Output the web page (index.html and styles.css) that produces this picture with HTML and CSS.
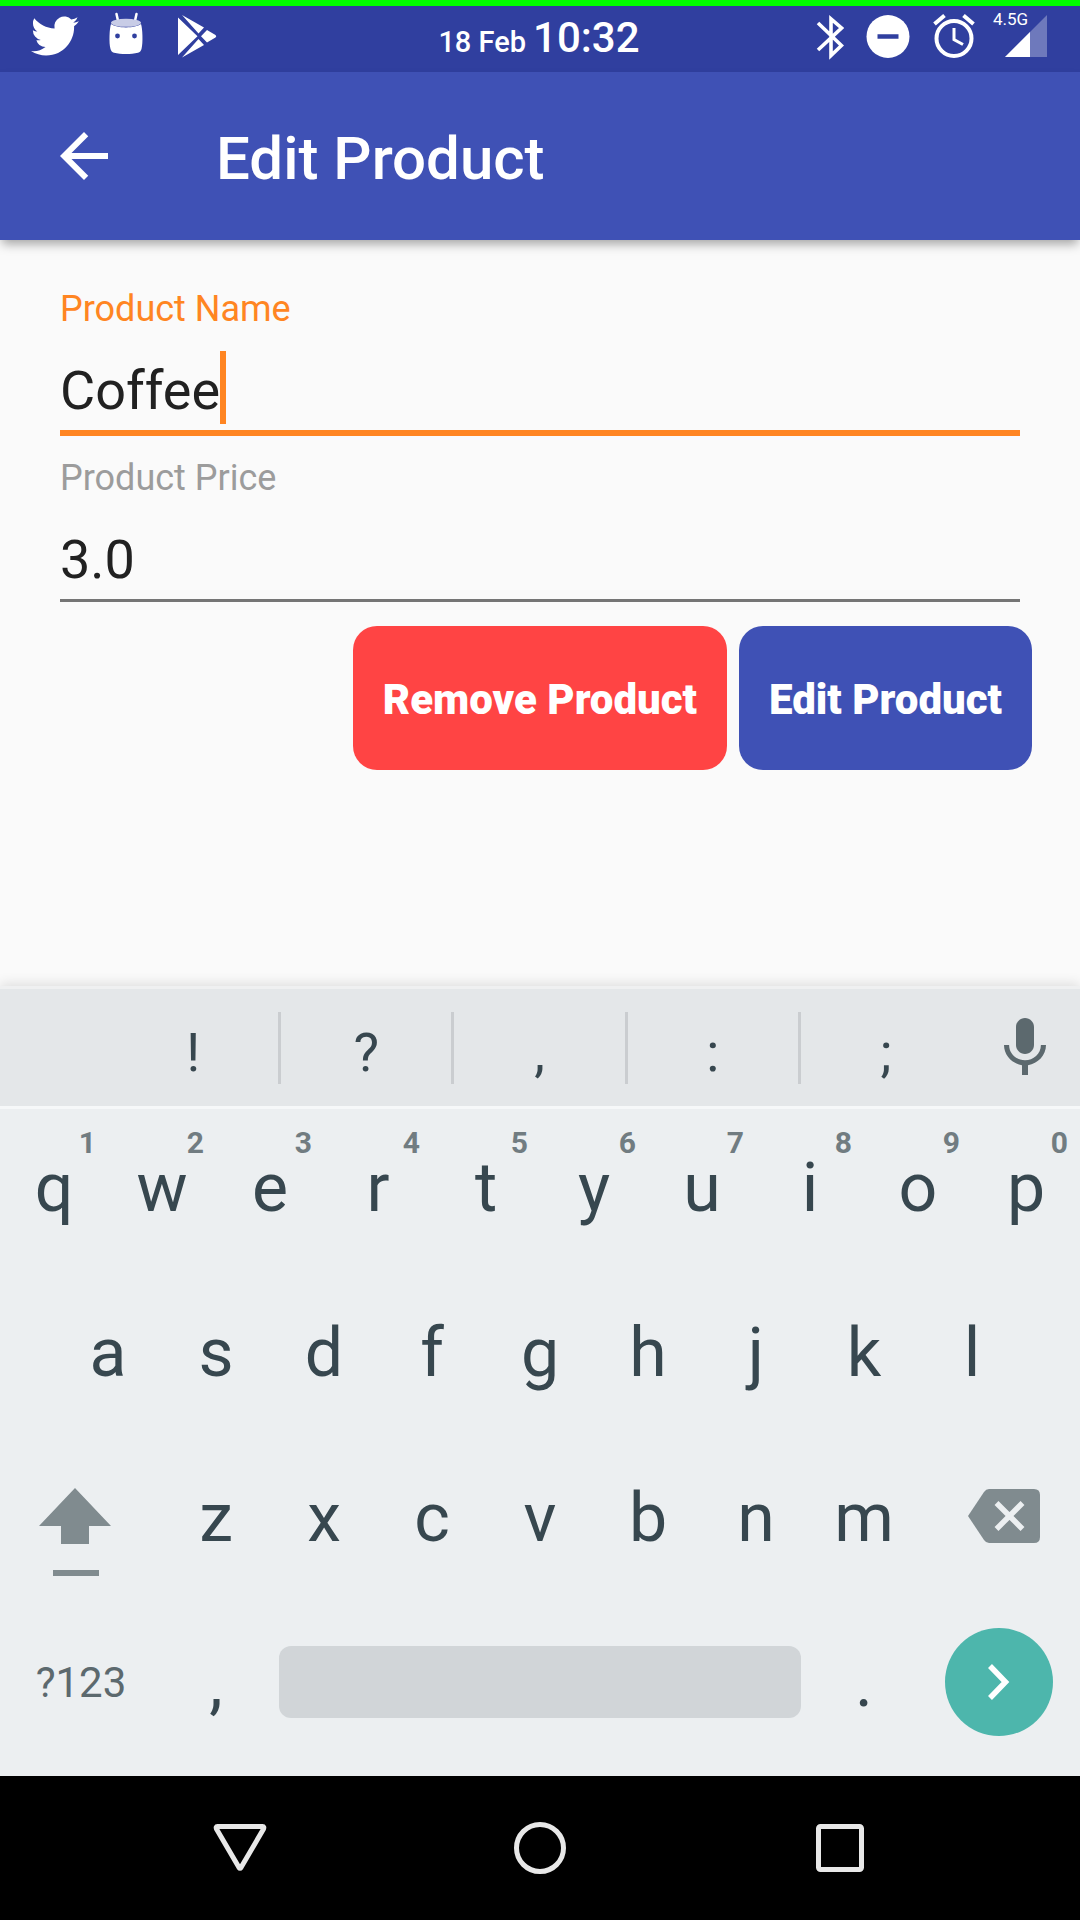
FILE: index.html
```html
<!DOCTYPE html>
<html lang="en">
<head>
<meta charset="utf-8">
<meta name="viewport" content="width=device-width, initial-scale=1">
<title>Edit Product</title>
<link rel="stylesheet" href="styles.css">
</head>
<body>
<div class="screen">
  <div class="status-bar">
    <div class="status-group status-left">
      <svg width="48" height="48" viewBox="0 0 24 24" fill="#fff" aria-hidden="true"><path d="M23.95 4.57a10 10 0 0 1-2.82.77 4.96 4.96 0 0 0 2.16-2.72c-.95.55-2 .95-3.13 1.18a4.92 4.92 0 0 0-8.38 4.48C7.69 8.09 4.07 6.13 1.64 3.16a4.82 4.82 0 0 0-.67 2.48c0 1.71.87 3.21 2.19 4.1a4.9 4.9 0 0 1-2.23-.62v.06a4.92 4.92 0 0 0 3.95 4.83 5 5 0 0 1-2.21.08 4.94 4.94 0 0 0 4.6 3.42A9.87 9.87 0 0 1 0 19.54a13.99 13.99 0 0 0 7.55 2.21c9.05 0 14-7.5 14-13.98 0-.21 0-.42-.02-.63a9.94 9.94 0 0 0 2.42-2.57z"/></svg>
      <svg width="36" height="48" viewBox="0 0 36 48" aria-hidden="true"><path d="M8.500 2l2 9M28.500 2l-2 9" stroke="#fff" stroke-width="2.500" stroke-linecap="round"/><path d="M3 12C1.500 16 .8 31 2.500 37c.5 2 1.700 3.300 3.500 3.800 7 1.600 17 1.600 24 0 1.800-.5 3-1.800 3.500-3.800C35.200 31 34.500 16 33 12c-6 4.500-24 4.500-30 0z" fill="#fff"/><ellipse cx="18" cy="10.800" rx="15" ry="4" fill="#c8cce6"/><circle cx="9.500" cy="24" r="2.400" fill="#303f9f"/><circle cx="26.500" cy="24" r="2.400" fill="#303f9f"/></svg>
      <svg width="46" height="48" viewBox="-4 0 46 48" fill="#fff" aria-hidden="true"><path d="M1 5.500l19.500 18.800L1 43z M5 3l22 12.500-5.500 6z M5 45.500l22-12.500-5.500-6z M30 18l8.500 5q1.500 1.300 0 2.600L30 30.500l-6-6.200z"/></svg>
    </div>
    <div class="clock"><span class="date">18 Feb</span> <span class="time">10:32</span></div>
    <div class="status-group status-right">
      <svg width="28" height="48" viewBox="0 0 28 48" fill="none" stroke="#fff" stroke-width="3.600" aria-hidden="true"><path d="M2 11l23.500 22.500L15 43.500V7l10.500 9L2 38"/></svg>
      <svg width="44" height="48" viewBox="0 0 44 48" aria-hidden="true"><circle cx="22" cy="24.500" r="21.500" fill="#fff"/><path d="M11.500 24.500h21" stroke="#303f9f" stroke-width="4.500"/></svg>
      <svg width="44" height="48" viewBox="0 0 44 48" fill="none" stroke="#fff" stroke-width="4" aria-hidden="true"><circle cx="22" cy="26.500" r="17.500"/><path d="M2.500 12l10-8.500M41.500 12l-10-8.500"/><path d="M22 16v11.500l9 5" stroke-width="3"/></svg>
      <div class="signal">
        <svg width="42" height="48" viewBox="0 0 42 48" aria-hidden="true"><path d="M0 45L42 3v42z" fill="#fff" fill-opacity=".3"/><path d="M0 45l25-25v25z" fill="#fff"/></svg>
        <span class="network">4.5G</span>
      </div>
    </div>
  </div>

  <header class="app-bar">
    <button class="back" type="button" aria-label="Back">
      <svg width="72" height="72" viewBox="0 0 24 24" fill="#fff"><path d="M20 11H7.830l5.590-5.590L12 4l-8 8 8 8 1.410-1.410L7.830 13H20v-2z"/></svg>
    </button>
    <h1 class="title">Edit Product</h1>
  </header>

  <main class="content">
    <form class="form">
      <div class="field field-active">
        <label class="label" for="name">Product Name</label>
        <input class="input" id="name" type="text" value="Coffee" autocomplete="off">
        <span class="caret"></span>
      </div>
      <div class="field">
        <label class="label" for="price">Product Price</label>
        <input class="input" id="price" type="text" inputmode="decimal" value="3.0" autocomplete="off">
      </div>
      <div class="actions">
        <button class="btn btn-danger" type="button">Remove Product</button>
        <button class="btn btn-primary" type="button">Edit Product</button>
      </div>
    </form>
  </main>

  <section class="keyboard" aria-label="Keyboard">
    <div class="suggestions">
      <button class="suggestion" type="button">!</button>
      <button class="suggestion" type="button">?</button>
      <button class="suggestion" type="button">,</button>
      <button class="suggestion" type="button">:</button>
      <button class="suggestion" type="button">;</button>
      <button class="mic" type="button" aria-label="Voice input">
        <svg width="72" height="72" viewBox="0 0 24 24" fill="#5c696e"><path d="M12 14c1.660 0 3-1.340 3-3V5c0-1.660-1.340-3-3-3S9 3.340 9 5v6c0 1.660 1.340 3 3 3z"/><path d="M17.300 11c0 3-2.540 5.100-5.300 5.100S6.700 14 6.700 11H5c0 3.410 2.720 6.230 6 6.720V21h2v-3.280c3.280-.48 6-3.300 6-6.720h-1.700z"/></svg>
      </button>
    </div>
    <div class="keys">
      <div class="row">
        <button class="key" type="button">q<span class="hint">1</span></button>
        <button class="key" type="button">w<span class="hint">2</span></button>
        <button class="key" type="button">e<span class="hint">3</span></button>
        <button class="key" type="button">r<span class="hint">4</span></button>
        <button class="key" type="button">t<span class="hint">5</span></button>
        <button class="key" type="button">y<span class="hint">6</span></button>
        <button class="key" type="button">u<span class="hint">7</span></button>
        <button class="key" type="button">i<span class="hint">8</span></button>
        <button class="key" type="button">o<span class="hint">9</span></button>
        <button class="key" type="button">p<span class="hint">0</span></button>
      </div>
      <div class="row row-inset">
        <button class="key" type="button">a</button>
        <button class="key" type="button">s</button>
        <button class="key" type="button">d</button>
        <button class="key" type="button">f</button>
        <button class="key" type="button">g</button>
        <button class="key" type="button">h</button>
        <button class="key" type="button">j</button>
        <button class="key" type="button">k</button>
        <button class="key" type="button">l</button>
      </div>
      <div class="row">
        <button class="key key-wide key-shift" type="button" aria-label="Shift">
          <svg width="72" height="88" viewBox="0 0 72 88" fill="#808b8f"><path d="M36 0l36 38H50v18H22V38H0z"/><path d="M14 82h46v6H14z"/></svg>
        </button>
        <button class="key" type="button">z</button>
        <button class="key" type="button">x</button>
        <button class="key" type="button">c</button>
        <button class="key" type="button">v</button>
        <button class="key" type="button">b</button>
        <button class="key" type="button">n</button>
        <button class="key" type="button">m</button>
        <button class="key key-wide key-delete" type="button" aria-label="Delete">
          <svg width="72" height="54" viewBox="0 0 72 54"><path d="M0 27L16 3q2-3 5-3h45q6 0 6 6v42q0 6-6 6H21q-3 0-5-3z" fill="#808b8f"/><path d="M28.500 14l26 26M54.500 14l-26 26" stroke="#eceff1" stroke-width="5.500"/></svg>
        </button>
      </div>
      <div class="row">
        <button class="key key-wide key-symbols" type="button">?123</button>
        <button class="key" type="button">,</button>
        <button class="key key-space" type="button" aria-label="Space"><span class="space-bar"></span></button>
        <button class="key" type="button">.</button>
        <button class="key key-wide key-enter" type="button" aria-label="Next">
          <span class="enter"><svg width="24" height="38" viewBox="0 0 24 38" fill="none" stroke="#fff" stroke-width="5.500"><path d="M3 3l15.500 16L3 35"/></svg></span>
        </button>
      </div>
    </div>
  </section>

  <nav class="nav-bar" aria-label="System navigation">
    <button class="nav-btn" type="button" aria-label="Back"><svg width="56" height="56" viewBox="0 0 56 56" fill="none" stroke="#e8e8e8" stroke-width="5" stroke-linejoin="round"><path d="M5.500 6.500h45q2 0 1 2.500L29 47.500q-1 1.500-2 0L4.500 9q-1-2.500 1-2.500z"/></svg></button>
    <button class="nav-btn" type="button" aria-label="Home"><svg width="56" height="56" viewBox="0 0 56 56" fill="none" stroke="#e8e8e8" stroke-width="5"><circle cx="28" cy="28" r="23.500"/></svg></button>
    <button class="nav-btn" type="button" aria-label="Recent apps"><svg width="56" height="56" viewBox="0 0 56 56" fill="none" stroke="#e8e8e8" stroke-width="5"><rect x="6.500" y="6.500" width="43" height="43" rx="2"/></svg></button>
  </nav>
</div>
</body>
</html>
```
FILE: styles.css
```css
* {
  box-sizing: border-box;
}

body {
  margin: 0;
  font-family: Roboto, "Noto Sans", sans-serif;
  color: #212121;
  background: #fafafa;
}

button {
  margin: 0;
  padding: 0;
  border: 0;
  background: none;
  color: inherit;
  font: inherit;
}

svg {
  display: block;
}

.screen {
  display: flex;
  flex-direction: column;
  min-height: 100vh;
}

/* Status bar */
.status-bar {
  display: grid;
  grid-template-columns: 1fr auto 1fr;
  height: 72px;
  padding: 0 32px;
  padding: 0 33px 0 31px;
  border-top: 6px solid #00ff00;
  background: #303f9f;
  color: #fff;
}

.status-group {
  display: flex;
  align-items: flex-start;
  padding-top: 6px;
}

.status-left {
  gap: 29px;
}

.status-right {
  justify-content: flex-end;
  gap: 22px;
}

.clock {
  padding-top: 8px;
  font-size: 28px;
  font-weight: 500;
  line-height: 48px;
}

.date {
  font-size: 29px;
}

.time {
  font-size: 42px;
}

.signal {
  position: relative;
  padding-left: 7px;
}

.network {
  position: absolute;
  top: -3px;
  left: -5px;
  font-size: 17px;
  line-height: 20px;
}

/* App bar */
.app-bar {
  display: flex;
  align-items: center;
  gap: 96px;
  height: 168px;
  padding: 0 48px;
  background: #3f51b5;
  color: #fff;
  box-shadow: 0 6px 10px -2px rgba(0, 0, 0, .35);
}

.title {
  margin: 0;
  padding-top: 5px;
  font-size: 60px;
  font-weight: 500;
  line-height: 72px;
}

/* Form */
.content {
  flex: 1;
  padding: 48px;
}

.form {
  display: flex;
  flex-direction: column;
}

.field {
  position: relative;
  display: flex;
  flex-direction: column;
  margin: 0 12px 24px;
}

.field-active {
  margin-bottom: 21px;
}

.label {
  font-size: 36px;
  line-height: 42px;
  color: #9c9c9c;
}

.input {
  width: 100%;
  height: 103px;
  padding: 20px 0 0;
  border: 0;
  border-bottom: 3px solid #757575;
  border-radius: 0;
  outline: 0;
  background: none;
  color: inherit;
  font: inherit;
  font-size: 54px;
}

.field-active .label {
  color: #ff8522;
}

.field-active .input {
  height: 106px;
  border-bottom: 6px solid #ff8522;
}

.caret {
  position: absolute;
  top: 63px;
  left: 160px;
  width: 6px;
  height: 73px;
  background: #ff8522;
}

.actions {
  display: flex;
  justify-content: flex-end;
  gap: 12px;
}

.btn {
  height: 144px;
  padding: 2px 30px 0;
  border-radius: 24px;
  color: #fff;
  font-size: 42px;
  font-weight: 900;
}

.btn-danger {
  background: #ff4444;
}

.btn-primary {
  background: #3f51b5;
}

/* Keyboard */
.keyboard {
  background: #eceff1;
  color: #37474f;
  box-shadow: 0 -2px 12px rgba(0, 0, 0, .12);
}

.suggestions {
  display: grid;
  grid-template-columns: repeat(5, 1fr) 106px;
  align-items: center;
  height: 123px;
  padding-left: 108px;
  border-top: 3px solid #eff0f1;
  border-bottom: 3px solid #f6f8f9;
  background: #e4e7e9;
}

.suggestion {
  height: 72px;
  padding-top: 9px;
  border-right: 3px solid #cacdd0;
  font-size: 54px;
  line-height: 63px;
}

.suggestion:nth-child(5) {
  border-right-color: transparent;
}

.mic {
  display: flex;
  justify-content: center;
  padding-right: 4px;
}

.keys {
  display: flex;
  flex-direction: column;
  gap: 9px;
  padding-bottom: 16px;
}

.row {
  display: grid;
  grid-template-columns: repeat(20, 1fr);
  height: 156px;
}

.key {
  position: relative;
  display: flex;
  grid-column: span 2;
  align-items: center;
  justify-content: center;
  padding-top: 2px;
  font-size: 68px;
}

.row-inset .key:first-child {
  grid-column: 2 / span 2;
}

.key-wide {
  grid-column: span 3;
}

.key-shift {
  padding: 30px 12px 0 0;
}

.key-delete {
  padding: 0 0 2px 10px;
}

.key-symbols {
  padding-top: 0;
  font-size: 42px;
  color: #5c696e;
}

.key-space {
  grid-column: span 10;
  padding: 0 9px;
}

.key-enter {
  padding-top: 0;
}

.space-bar {
  width: 100%;
  height: 72px;
  border-radius: 12px;
  background: #d1d5d8;
}

.hint {
  position: absolute;
  top: 16px;
  right: 12px;
  font-size: 30px;
  font-weight: 700;
  line-height: 36px;
  color: #717c81;
}

.enter {
  display: flex;
  align-items: center;
  justify-content: center;
  width: 108px;
  height: 108px;
  border-radius: 50%;
  background: #4db6ac;
}

/* System navigation */
.nav-bar {
  display: grid;
  grid-template-columns: repeat(3, 1fr);
  height: 144px;
  padding: 0 90px;
  background: #000;
}

.nav-btn {
  display: flex;
  align-items: center;
  justify-content: center;
}
```
